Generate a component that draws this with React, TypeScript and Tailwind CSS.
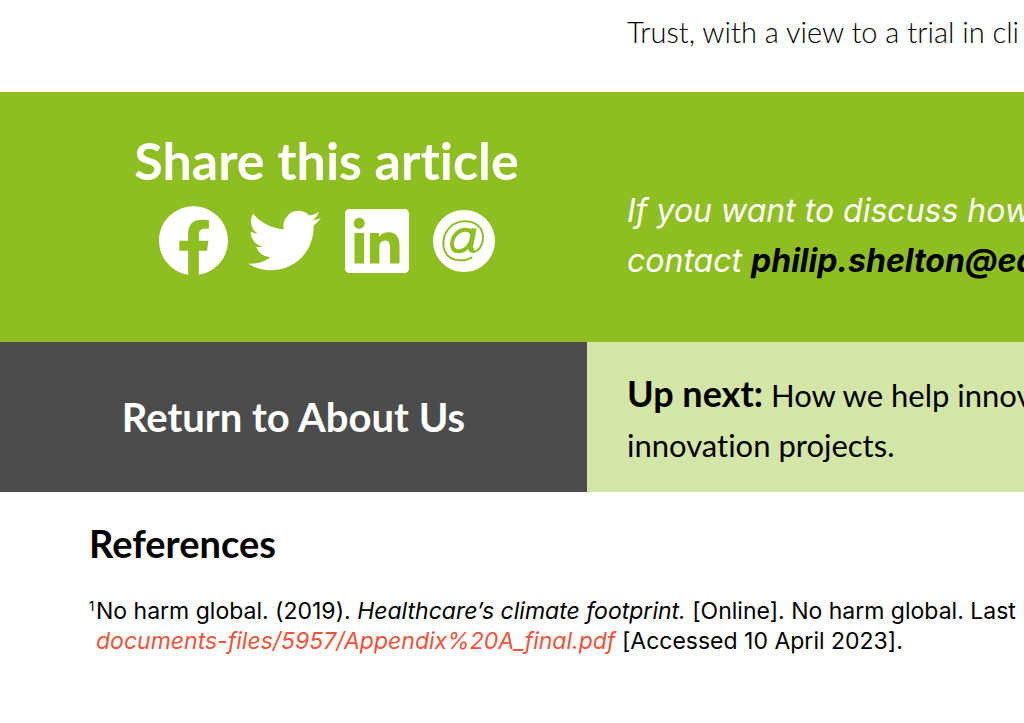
import type { ReactNode } from "react";

const iconPaths = {
  facebook:
    "M24 12.073c0-6.627-5.373-12-12-12s-12 5.373-12 12c0 5.99 4.388 10.954 10.125 11.854v-8.385H7.078v-3.47h3.047V9.43c0-3.007 1.792-4.669 4.533-4.669 1.312 0 2.686.235 2.686.235v2.953H15.83c-1.491 0-1.956.925-1.956 1.874v2.25h3.328l-.532 3.47h-2.796v8.385C19.612 23.027 24 18.062 24 12.073z",
  twitter:
    "M23.953 4.57a10 10 0 01-2.825.775 4.958 4.958 0 002.163-2.723c-.951.555-2.005.959-3.127 1.184a4.92 4.92 0 00-8.384 4.482C7.69 8.095 4.067 6.13 1.64 3.162a4.822 4.822 0 00-.666 2.475c0 1.71.87 3.213 2.188 4.096a4.904 4.904 0 01-2.228-.616v.06a4.923 4.923 0 003.946 4.827 4.996 4.996 0 01-2.212.085 4.936 4.936 0 004.604 3.417 9.867 9.867 0 01-6.102 2.105c-.39 0-.779-.023-1.17-.067a13.995 13.995 0 007.557 2.209c9.053 0 13.998-7.496 13.998-13.985 0-.21 0-.42-.015-.63A9.935 9.935 0 0024 4.59z",
  linkedin:
    "M20.447 20.452h-3.554v-5.569c0-1.328-.027-3.037-1.852-3.037-1.853 0-2.136 1.445-2.136 2.939v5.667H9.351V9h3.414v1.561h.046c.477-.9 1.637-1.85 3.37-1.85 3.601 0 4.267 2.37 4.267 5.455v6.286zM5.337 7.433c-1.144 0-2.063-.926-2.063-2.065 0-1.138.92-2.063 2.063-2.063 1.14 0 2.064.925 2.064 2.063 0 1.139-.925 2.065-2.064 2.065zm1.782 13.019H3.555V9h3.564v11.452zM22.225 0H1.771C.792 0 0 .774 0 1.729v20.542C0 23.227.792 24 1.771 24h20.451C23.2 24 24 23.227 24 22.271V1.729C24 .774 23.2 0 22.222 0h.003z",
};

function ShareLink({ label, children }: { label: string; children: ReactNode }) {
  return (
    <a href="#share" aria-label={label} className="block">
      {children}
    </a>
  );
}

function EmailIcon() {
  return (
    <svg viewBox="309 62 186 186" className="size-[62px]" fill="none" stroke="#8fbe22" strokeLinecap="butt">
      <circle cx="402" cy="155" r="93" fill="#fff" stroke="none" />
      <path
        strokeWidth="6"
        d="M427 204C416 210 404 213 391 213C360 213 340 193 340 162C340 124 368 96 405 96C438 96 459 116 459 144C459 169 445 187 429 187"
      />
      <path strokeWidth="12" d="M428 141C427 128 419 121 407 121C383 121 366 143 366 164C366 178 373 186 386 186C407 186 425 164 428 141Z" />
      <path strokeWidth="15" d="M432 117L422 171C420 181 424 185 433 183" />
    </svg>
  );
}

export default function App() {
  return (
    <div className="w-full overflow-hidden bg-white pb-16 font-['Lato',sans-serif] text-black [font-variant-ligatures:none]">
      <div className="grid grid-cols-[587px_minmax(0,1fr)]">
        <p className="col-start-2 pt-3 pb-10 pl-10 text-[29px] leading-10 font-light whitespace-nowrap">
          Trust, with a view to a trial in cli
        </p>
      </div>

      <section className="grid grid-cols-[587px_minmax(0,1fr)] bg-[#8fbe22] text-white">
        <div className="flex flex-col items-center pt-[38px] pr-[67px] pb-[65px] pl-[133px]">
          <h2 className="text-[52px] leading-[60px] font-bold whitespace-nowrap">Share this article</h2>
          <div className="mt-[14px] flex items-center">
            <ShareLink label="Share on Facebook">
              <svg viewBox="0 0 24 24" className="mr-5 size-[69px]" fill="currentColor">
                <path d={iconPaths.facebook} />
              </svg>
            </ShareLink>
            <ShareLink label="Share on Twitter">
              <svg viewBox="0 0 24 24" className="mr-6 size-[73px]" fill="currentColor">
                <path d={iconPaths.twitter} />
              </svg>
            </ShareLink>
            <ShareLink label="Share on LinkedIn">
              <svg viewBox="0 0 24 24" className="mr-6 size-16" fill="currentColor">
                <path d={iconPaths.linkedin} />
              </svg>
            </ShareLink>
            <ShareLink label="Share by email">
              <EmailIcon />
            </ShareLink>
          </div>
        </div>
        <p className="pt-[94px] pl-10 font-['Inter',sans-serif] text-[32px] leading-[50px] whitespace-nowrap italic">
          If you want to discuss how
          <br />
          contact{" "}
          <a href="#email" className="font-bold text-black">
            philip.shelton@ea
          </a>
        </p>
      </section>

      <section className="grid grid-cols-[587px_minmax(0,1fr)]">
        <a
          href="#about"
          className="flex items-center justify-center bg-[#4c4c4c] text-[40px] font-bold whitespace-nowrap text-white"
        >
          Return to About Us
        </a>
        <p className="bg-[#d3e5a7] pt-[26px] pb-[22px] pl-10 text-[31px] leading-[50px] whitespace-nowrap">
          <strong className="text-[36px] font-bold">Up next:</strong> How we help innov
          <br />
          innovation projects.
        </p>
      </section>

      <section className="pt-[26px] pl-[89px]">
        <h2 className="text-[38px] leading-[50px] font-bold">References</h2>
        <div className="mt-7 flex font-['Inter',sans-serif] text-[23px] leading-[30px] whitespace-nowrap">
          <span className="w-[7px] shrink-0 text-[13px] leading-5">1</span>
          <p>
            No harm global. (2019). <em>Healthcare’s climate footprint.</em> [Online]. No harm global. Last U
            <br />
            <a href="#appendix" className="text-[#f0533a] italic">
              documents-files/5957/Appendix%20A_final.pdf
            </a>{" "}
            [Accessed 10 April 2023].
          </p>
        </div>
      </section>
    </div>
  );
}
